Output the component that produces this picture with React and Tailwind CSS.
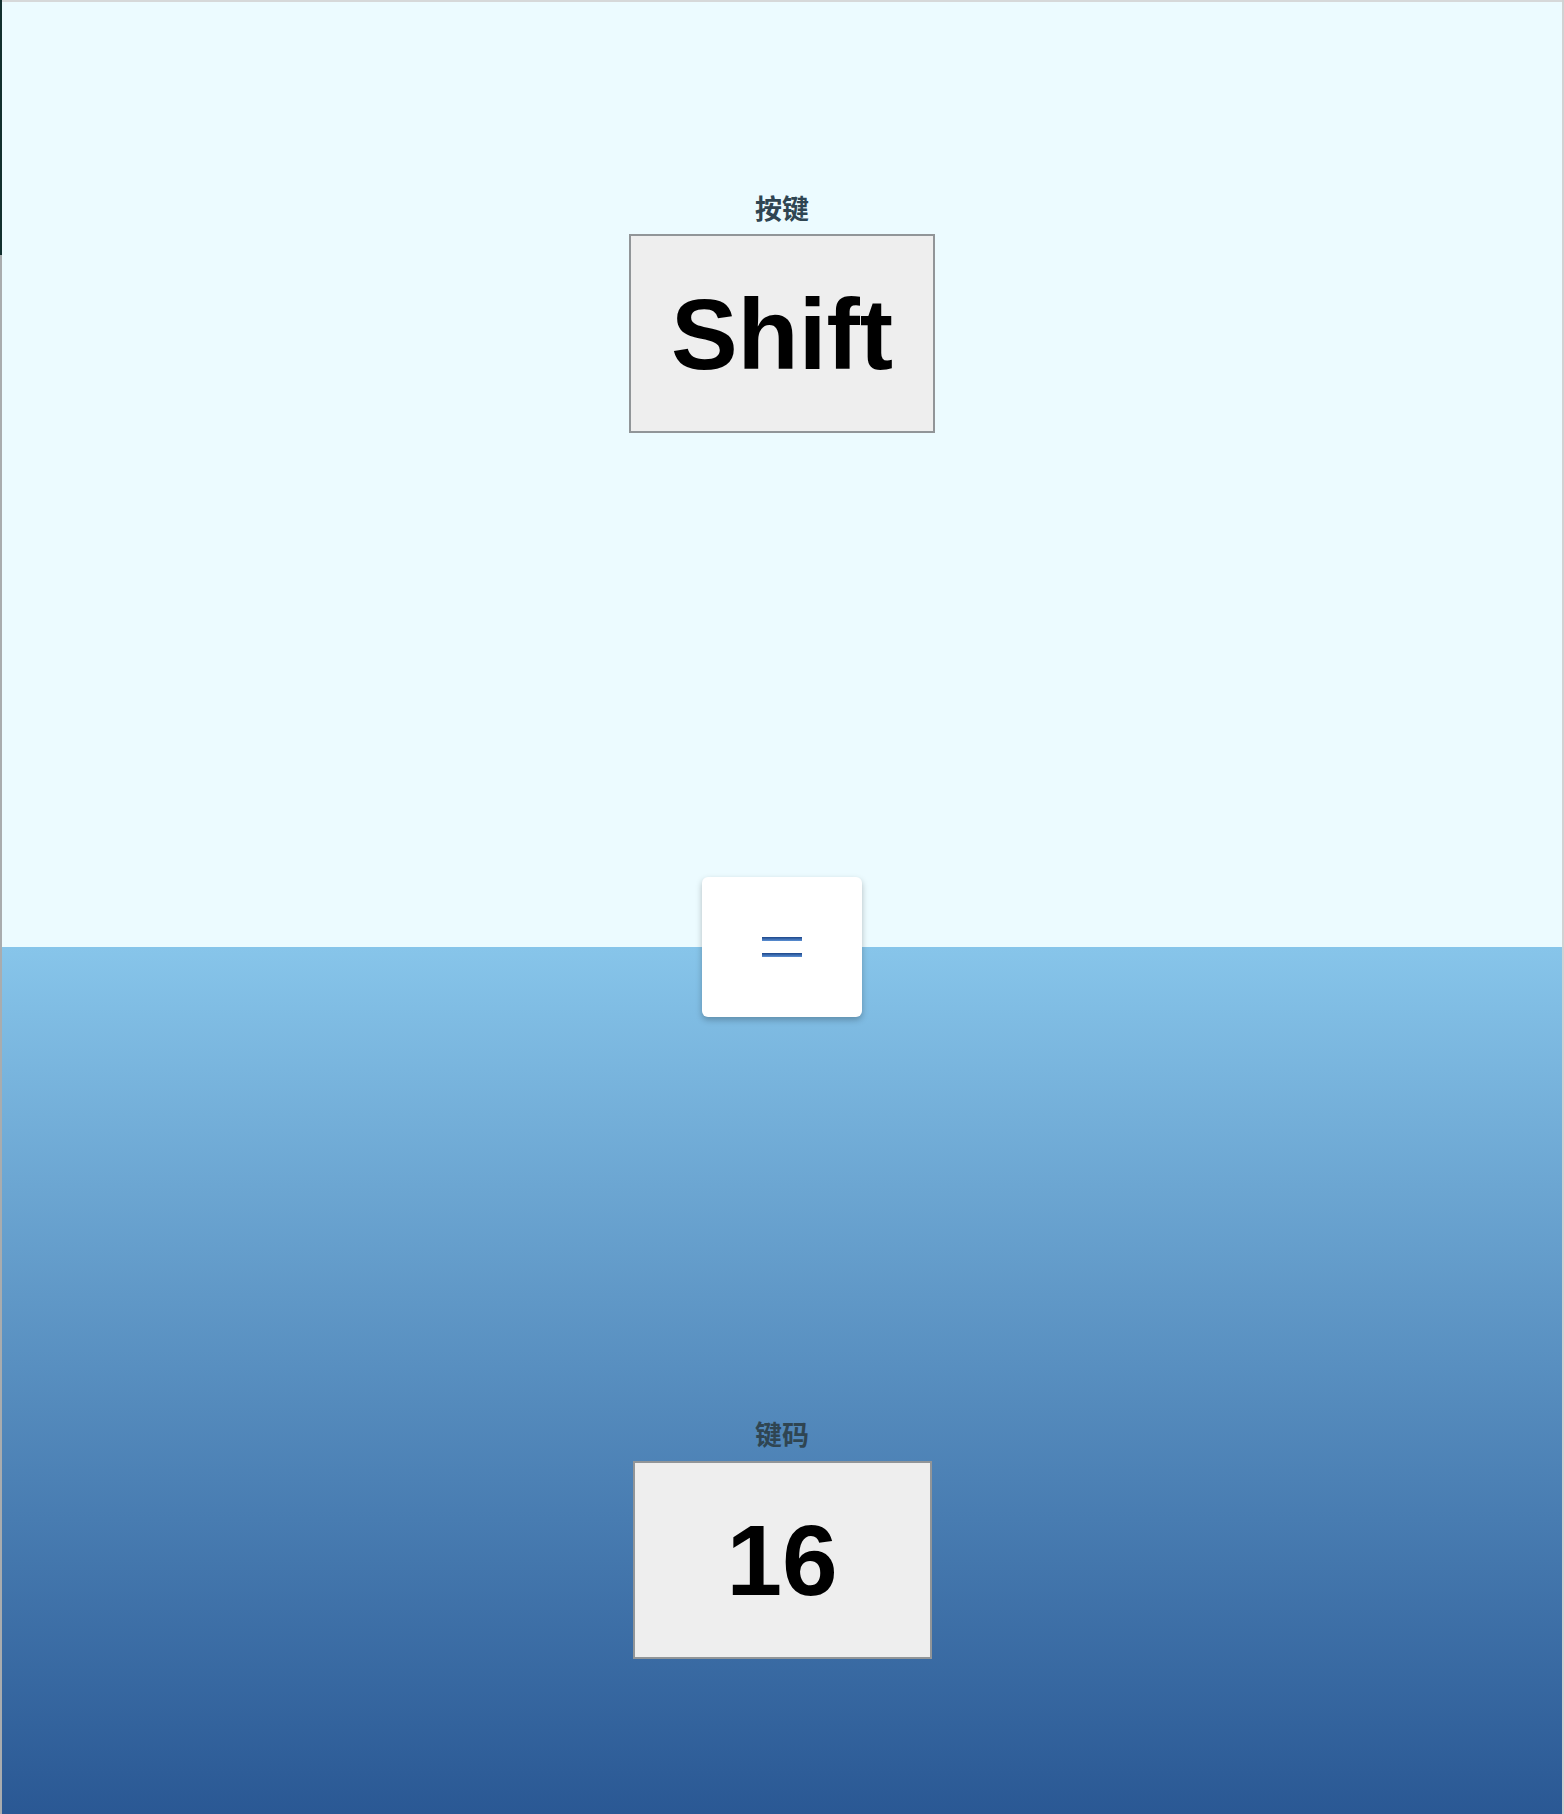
export default function App() {
  const font = { fontFamily: '"Liberation Sans", Arial, sans-serif' };
  const cjk = { fontFamily: '"Noto Sans CJK SC", "Noto Sans", sans-serif' };
  return (
    <div className="flex w-[1564px] h-[1814px] overflow-hidden">
      <div className="w-[2px] flex flex-col shrink-0">
        <div className="h-[255px] bg-[#12302f]" />
        <div className="flex-1 bg-[#a9acae]" />
      </div>
      <div className="relative flex-1 flex flex-col">
        <div className="h-[2px] bg-[#d6d8d9]" />
        <div className="h-[945px] bg-[#ecfbff] flex flex-col items-center pt-[191px]">
          <div className="h-[30px] leading-[30px] text-[27px] font-bold text-[#2f4552] mb-[11px]" style={cjk}>按键</div>
          <div className="h-[199px] min-w-[299px] px-[40px] bg-[#eeeeee] border-2 border-[#919598] flex items-center justify-center">
            <span className="text-[100px] leading-none font-bold text-black" style={font}>Shift</span>
          </div>
        </div>
        <div className="flex-1 bg-linear-to-b from-[#87c5ea] to-[#2a5894] flex flex-col items-center pt-[472px]">
          <div className="h-[30px] leading-[30px] text-[27px] font-bold text-[#2f4552] mb-[12px]" style={cjk}>键码</div>
          <div className="h-[198px] min-w-[299px] px-[40px] bg-[#eeeeee] border-2 border-[#919598] flex items-center justify-center">
            <span className="text-[100px] leading-none font-bold text-black" style={font}>16</span>
          </div>
        </div>
        <div className="absolute left-1/2 -translate-x-1/2 top-[877px] w-[160px] h-[140px] bg-white rounded-md shadow-[0_3px_6px_rgba(0,0,0,0.25)] flex flex-col items-center justify-center gap-[12px]">
          <div className="w-[40px] h-[4px] bg-linear-to-b from-[#1c4689] to-[#5c90d4]" />
          <div className="w-[40px] h-[4px] bg-linear-to-b from-[#1c4689] to-[#5c90d4]" />
        </div>
      </div>
      <div className="w-[2px] shrink-0 bg-[#d0d2d3]" />
    </div>
  );
}
